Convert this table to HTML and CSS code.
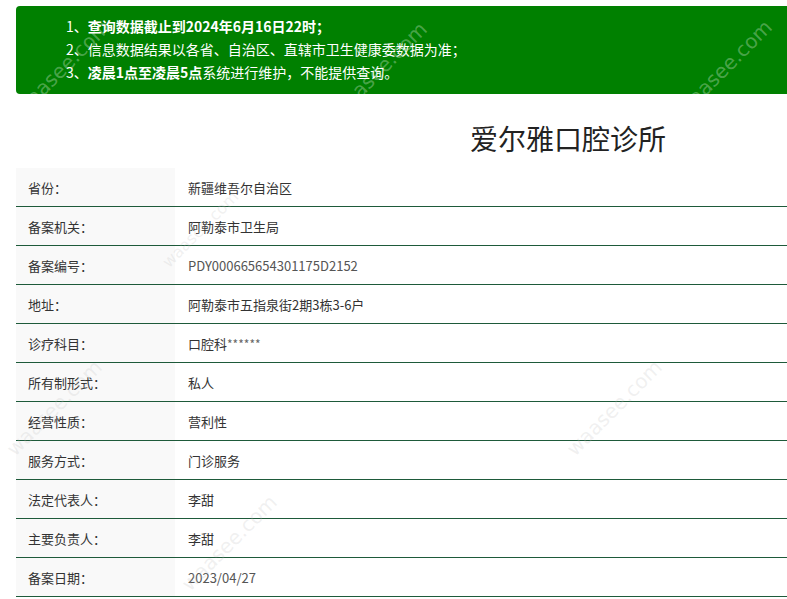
FILE: index.html
```html
<!DOCTYPE html>
<html lang="zh">
<head>
<meta charset="utf-8">
<link rel="stylesheet" href="styles.css">
</head>
<body>
<div class="page">
  <div class="notice">
    <p class="line">1、<b>查询数据截止到2024年6月16日22时；</b></p>
    <p class="line">2、信息数据结果以各省、自治区、直辖市卫生健康委数据为准；</p>
    <p class="line">3、<b>凌晨1点至凌晨5点</b>系统进行维护，不能提供查询。</p>
  </div>
  <h1 class="title">爱尔雅口腔诊所</h1>
  <div class="table">
    <div class="row"><div class="label">省份：</div><div class="value">新疆维吾尔自治区</div></div>
    <div class="row"><div class="label">备案机关：</div><div class="value">阿勒泰市卫生局</div></div>
    <div class="row"><div class="label">备案编号：</div><div class="value grey">PDY000665654301175D2152</div></div>
    <div class="row"><div class="label">地址：</div><div class="value">阿勒泰市五指泉街2期3栋3-6户</div></div>
    <div class="row"><div class="label">诊疗科目：</div><div class="value"><span>口腔科<span class="stars">******</span></span></div></div>
    <div class="row"><div class="label">所有制形式：</div><div class="value">私人</div></div>
    <div class="row"><div class="label">经营性质：</div><div class="value">营利性</div></div>
    <div class="row"><div class="label">服务方式：</div><div class="value">门诊服务</div></div>
    <div class="row"><div class="label">法定代表人：</div><div class="value">李甜</div></div>
    <div class="row"><div class="label">主要负责人：</div><div class="value">李甜</div></div>
    <div class="row"><div class="label">备案日期：</div><div class="value grey">2023/04/27</div></div>
  </div>
</div>
<div class="wm wm1">waasee.com</div>
<div class="wm wm2">waasee.com</div>
<div class="wm wm3">waasee.com</div>
<div class="wm wm4">waasee.com</div>
<div class="wm wm5">waasee.com</div>
<div class="wm wm6">waasee.com</div>
<div class="wm wm7">waasee.com</div>
</body>
</html>
```
FILE: styles.css
```css
html, body {
  margin: 0;
  padding: 0;
  overflow: hidden;
  background: #fff;
}
body {
  font-family: "Noto Sans CJK SC", "Noto Sans", sans-serif;
  color: #333;
  font-size: 13px;
  width: 787px;
  height: 599px;
  position: relative;
}
.page {
  width: 1104px;
  padding: 6px 0 0 16px;
}
.notice {
  background: #008000;
  color: #fff;
  border-radius: 4px;
  padding: 9px 0 10px 50px;
}
.line {
  margin: 0;
  line-height: 23px;
  font-size: 14px;
}
.line b {
  font-weight: 700;
}
.title {
  margin: 0;
  text-align: center;
  font-weight: 400;
  font-size: 28px;
  line-height: 36px;
  padding: 26px 0 12px;
  color: #222;
}
.table {
  display: flex;
  flex-direction: column;
}
.row {
  display: flex;
  height: 38px;
  align-items: stretch;
  border-bottom: 1px solid #1e5a3a;
}
.label {
  width: 147px;
  padding-left: 12px;
  background: #f9f9f9;
  display: flex;
  align-items: center;
}
.value {
  padding-left: 13px;
  display: flex;
  align-items: center;
}
.grey {
  color: #555;
}
.stars {
  color: #666;
  font-size: 12px;
}
.wm {
  position: absolute;
  font-family: "DejaVu Sans", sans-serif;
  font-size: 20px;
  color: rgba(190, 190, 190, 0.22);
  transform: rotate(-45deg);
  transform-origin: left center;
  white-space: nowrap;
  pointer-events: none;
}
.wm1 { left: 18px; top: 100px; color: rgba(255,255,255,0.3); }
.wm2 { left: 335px; top: 102px; color: rgba(255,255,255,0.3); }
.wm3 { left: 680px; top: 100px; color: rgba(255,255,255,0.3); }
.wm4 { left: 165px; top: 255px; font-size: 16px; }
.wm5 { left: 10px; top: 440px; }
.wm6 { left: 570px; top: 440px; }
.wm7 { left: 185px; top: 575px; }
```
